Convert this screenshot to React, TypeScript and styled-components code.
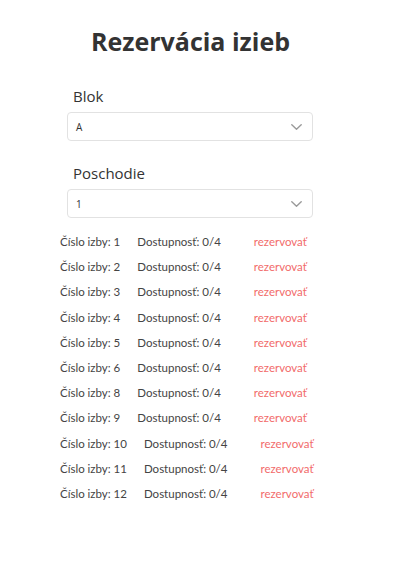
import styled, { createGlobalStyle } from "styled-components";

const GlobalStyle = createGlobalStyle`
  * {
    box-sizing: border-box;
  }
  body {
    margin: 0;
    background: #ffffff;
    font-family: Lato, "Open Sans", sans-serif;
    color: #333333;
  }
`;

const Page = styled.div`
  inline-size: 407px;
  min-block-size: 573px;
  padding: 24px 0 0 0;
  display: flex;
  flex-direction: column;
  align-items: center;
`;

const Title = styled.h1`
  margin: 0 0 28px 0;
  font-family: "Open Sans", sans-serif;
  font-size: 25px;
  font-weight: 700;
  color: #333333;
  text-align: center;
  inline-size: 100%;
  padding-inline-end: 26px;
`;

const Form = styled.div`
  inline-size: 246px;
  margin-inline-end: 27px;
  display: flex;
  flex-direction: column;
`;

const Field = styled.div`
  display: flex;
  flex-direction: column;
  margin-block-end: 22px;
  &:last-child {
    margin-block-end: 11px;
  }
`;

const Label = styled.label`
  font-family: "Open Sans", sans-serif;
  font-size: 15px;
  color: #333333;
  padding-inline-start: 6px;
  margin-block-end: 6px;
`;

const SelectBox = styled.div`
  position: relative;
  block-size: 29px;
  border: 1px solid #e2e2e2;
  border-radius: 4px;
  display: flex;
  align-items: center;
  padding: 0 8px;
  font-family: "Open Sans", sans-serif;
  font-size: 10px;
  color: #333333;
`;

const Chevron = styled.svg`
  position: absolute;
  inset-inline-end: 10px;
  inset-block-start: 50%;
  transform: translateY(-50%);
`;

const Rooms = styled.div`
  align-self: flex-start;
  padding-inline-start: 60px;
  display: flex;
  flex-direction: column;
`;

const Row = styled.div`
  display: flex;
  align-items: center;
  block-size: 25.2px;
  font-size: 11.5px;
  color: #444444;
`;

const Number = styled.span`
  margin-inline-end: 17px;
`;

const Availability = styled.span`
  margin-inline-end: 33px;
`;

const Reserve = styled.a`
  color: #f26b6b;
  text-decoration: none;
  cursor: pointer;
`;

const Select = ({ value }: { value: string }) => (
  <SelectBox>
    {value}
    <Chevron width="11" height="6" viewBox="0 0 11 6" fill="none">
      <path d="M0.8 0.8l4.7 4.4 4.7-4.4" stroke="#9a9a9a" strokeWidth="1.4" strokeLinecap="round" strokeLinejoin="round" />
    </Chevron>
  </SelectBox>
);

const rooms = [1, 2, 3, 4, 5, 6, 8, 9, 10, 11, 12];

export default function App() {
  return (
    <>
      <GlobalStyle />
      <Page>
        <Title>Rezervácia izieb</Title>
        <Form>
          <Field>
            <Label>Blok</Label>
            <Select value="A" />
          </Field>
          <Field>
            <Label>Poschodie</Label>
            <Select value="1" />
          </Field>
        </Form>
        <Rooms>
          {rooms.map((n) => (
            <Row key={n}>
              <Number>Číslo izby: {n}</Number>
              <Availability>Dostupnosť: 0/4</Availability>
              <Reserve>rezervovať</Reserve>
            </Row>
          ))}
        </Rooms>
      </Page>
    </>
  );
}
